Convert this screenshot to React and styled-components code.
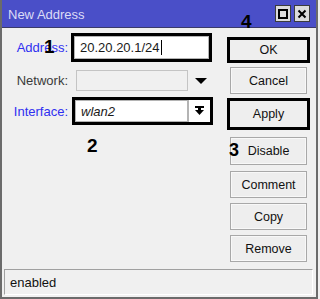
import React from "react";
import styled, { createGlobalStyle } from "styled-components";

const Global = createGlobalStyle`
  html, body { margin: 0; padding: 0; background: #f0f0f0; }
  body { font-family: "Liberation Sans", Arial, sans-serif; }
  * { box-sizing: border-box; }
`;

const Window = styled.div`
  position: relative;
  width: 318px;
  height: 299px;
  display: flex;
  flex-direction: column;
  background: #f0f0f0;
  border-left: 2px solid #6b6b6b;
  border-right: 2px solid #6b6b6b;
  border-bottom: 2px solid #6b6b6b;
`;

const TitleBar = styled.div`
  height: 28px;
  flex: none;
  display: flex;
  align-items: center;
  padding: 0 6px 0 6px;
  background: #4a4fc8;
  border-bottom: 1px solid #3a3a6a;
`;

const Title = styled.span`
  color: #dcdcf6;
  font-size: 13px;
  margin-top: 1px;
`;

const TitleButtons = styled.div`
  margin-left: auto;
  display: flex;
  gap: 3px;
`;

const TitleBtn = styled.div`
  width: 16px;
  height: 17px;
  background: #dcdcdc;
  border: 1px solid #3c3c3c;
  display: flex;
  align-items: center;
  justify-content: center;
`;

const Body = styled.div`
  flex: 1;
  display: flex;
`;

const Form = styled.div`
  width: 223px;
  padding-top: 5px;
  display: flex;
  flex-direction: column;
`;

const Row = styled.div`
  display: grid;
  grid-template-columns: 66px 1fr;
  align-items: center;
  margin-top: ${(p) => p.$mt || 0}px;
`;

const Label = styled.span`
  text-align: right;
  font-size: 13px;
  color: ${(p) => (p.$blue ? "#2f2ff0" : "#3a3a3a")};
`;

const FieldCell = styled.div`
  display: flex;
  align-items: center;
  margin-left: ${(p) => p.$ml}px;
`;

const MarkedBox = styled.div`
  width: 141px;
  height: ${(p) => p.$h}px;
  border: 3px solid #000;
  display: flex;
  background: #fff;
`;

const Input = styled.div`
  flex: 1;
  display: flex;
  align-items: center;
  background: #fff;
  border: 1px solid #b4b4b4;
  padding-left: 5px;
  font-size: 13px;
  color: #1a1a1a;
  font-style: ${(p) => (p.$italic ? "italic" : "normal")};
`;

const Caret = styled.span`
  display: inline-block;
  width: 1px;
  height: 15px;
  background: #000;
  margin-left: 1px;
`;

const DisabledInput = styled.div`
  width: 112px;
  height: 21px;
  border: 1px solid #c4c4c4;
  background: #f0f0f0;
`;

const DropTriangle = styled.svg`
  margin-left: 7px;
`;

const DropButton = styled.div`
  width: 22px;
  display: flex;
  align-items: center;
  justify-content: center;
  border-left: 1px solid #b4b4b4;
  background: #fff;
`;

const Buttons = styled.div`
  width: 83px;
  margin-left: 2px;
  padding-top: 9px;
  display: flex;
  flex-direction: column;
  align-items: center;
`;

const Btn = styled.div`
  width: ${(p) => (p.$marked ? 83 : 77)}px;
  height: ${(p) => p.$h || 27}px;
  margin-top: ${(p) => p.$mt || 0}px;
  display: flex;
  align-items: center;
  justify-content: center;
  font-size: 12.5px;
  color: #111;
  background: #eeeeee;
  border: ${(p) => (p.$marked ? "3px solid #000" : "1px solid #a8a8a8")};
  box-shadow: ${(p) => (p.$marked ? "none" : "inset 0 0 0 1px #f8f8f8")};
`;

const StatusBar = styled.div`
  height: 26px;
  margin: 0 3px 2px 2px;
  display: flex;
  align-items: center;
  padding-left: 5px;
  font-size: 13px;
  color: #111;
  border-top: 1px solid #a0a0a0;
  border-left: 1px solid #a0a0a0;
  border-right: 1px solid #ffffff;
  border-bottom: 1px solid #ffffff;
`;

const Mark = styled.span`
  position: absolute;
  left: ${(p) => p.$x}px;
  top: ${(p) => p.$y}px;
  font-size: ${(p) => p.$size || 19}px;
  line-height: ${(p) => p.$size || 19}px;
  font-weight: bold;
  color: #000;
`;

export default function App() {
  return (
    <>
      <Global />
      <Window>
        <TitleBar>
          <Title>New Address</Title>
          <TitleButtons>
            <TitleBtn>
              <svg width="10" height="10" viewBox="0 0 10 10">
                <rect x="1" y="1" width="8" height="8" fill="none" stroke="#000" strokeWidth="2" />
              </svg>
            </TitleBtn>
            <TitleBtn>
              <svg width="10" height="10" viewBox="0 0 10 10">
                <path d="M1.5 1.5 L8.5 8.5 M8.5 1.5 L1.5 8.5" stroke="#000" strokeWidth="2" />
              </svg>
            </TitleBtn>
          </TitleButtons>
        </TitleBar>
        <Body>
          <Form>
            <Row>
              <Label $blue>Address:</Label>
              <FieldCell $ml={3}>
                <MarkedBox $h={29}>
                  <Input>
                    20.20.20.1/24
                    <Caret />
                  </Input>
                </MarkedBox>
              </FieldCell>
            </Row>
            <Row $mt={8}>
              <Label>Network:</Label>
              <FieldCell $ml={8}>
                <DisabledInput />
                <DropTriangle width="12" height="6" viewBox="0 0 12 6">
                  <path d="M0 0 H12 L6 6 Z" fill="#000" />
                </DropTriangle>
              </FieldCell>
            </Row>
            <Row $mt={6}>
              <Label $blue>Interface:</Label>
              <FieldCell $ml={4}>
                <MarkedBox $h={28}>
                  <Input $italic>wlan2</Input>
                  <DropButton>
                    <svg width="9" height="10" viewBox="0 0 9 10">
                      <rect x="0" y="0" width="9" height="2" fill="#000" />
                      <path d="M0 4 H9 L4.5 9 Z" fill="#000" />
                      <rect x="3" y="2" width="3" height="3" fill="#000" />
                    </svg>
                  </DropButton>
                </MarkedBox>
              </FieldCell>
            </Row>
          </Form>
          <Buttons>
            <Btn $marked $h={26}>OK</Btn>
            <Btn $mt={4}>Cancel</Btn>
            <Btn $marked $h={32} $mt={4}>Apply</Btn>
            <Btn $h={28} $mt={7}>Disable</Btn>
            <Btn $mt={6}>Comment</Btn>
            <Btn $mt={5}>Copy</Btn>
            <Btn $mt={5}>Remove</Btn>
          </Buttons>
        </Body>
        <StatusBar>enabled</StatusBar>
        <Mark $x={42} $y={37}>1</Mark>
        <Mark $x={85} $y={136}>2</Mark>
        <Mark $x={227} $y={141} $size={18}>3</Mark>
        <Mark $x={239} $y={12}>4</Mark>
      </Window>
    </>
  );
}
